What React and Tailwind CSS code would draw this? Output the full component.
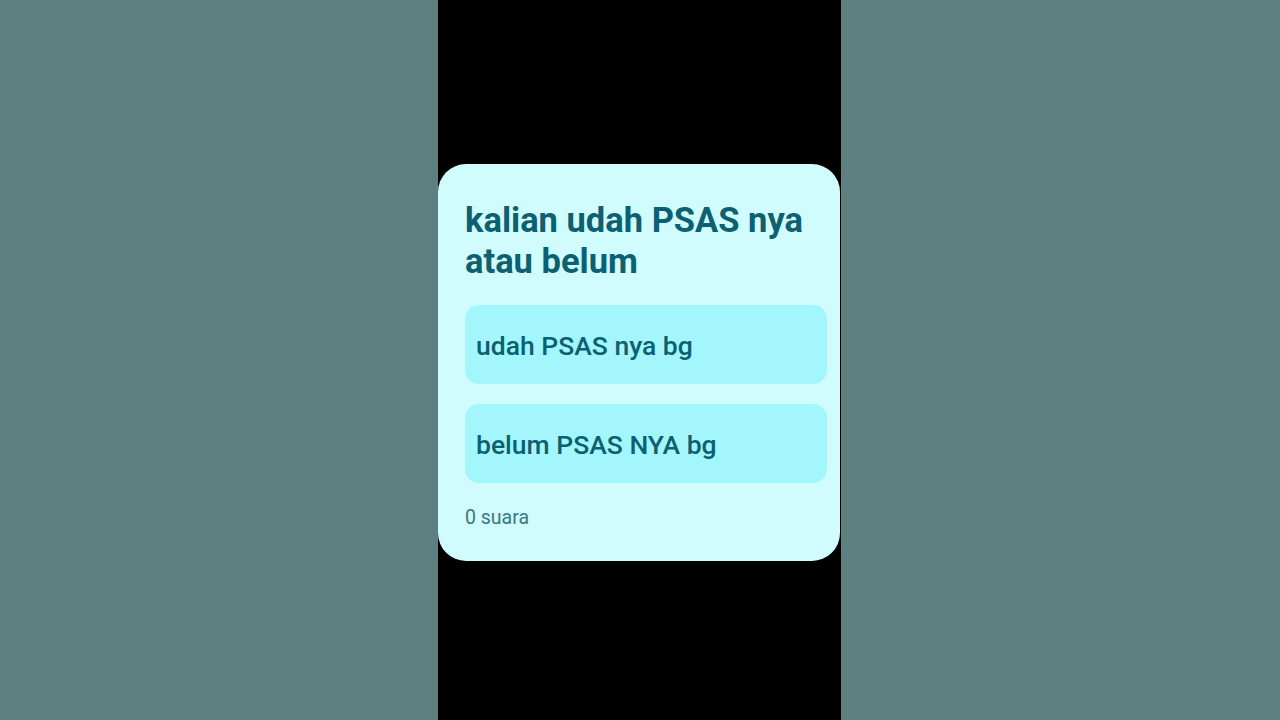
export default function App() {
    const options = ["udah PSAS nya bg", "belum PSAS NYA bg"]

    return (
        <div
            className="flex h-[720px] w-[1280px] bg-[#5e7f7f]"
            style={{ fontFamily: "Roboto, 'Noto Sans', sans-serif" }}
        >
            <div className="ml-[438px] flex h-full w-[403px] flex-col overflow-hidden bg-black pt-[164px]">

                <div className="w-[402px] rounded-[28px] bg-[#d0fcfd] pb-[31px] pl-[27px] pr-[13px] pt-[36px]">

                    <h1 className="text-[34.5px] font-bold leading-[41px] text-[#0c6072]">
                        kalian udah PSAS nya
                        <br />
                        atau belum
                    </h1>

                    <div className="mt-[23px] flex flex-col gap-[20px]">
                        {options.map((opt) => (
                            <div
                                key={opt}
                                className="flex h-[79px] items-center rounded-[14px] bg-[#a3f7fc] pl-[11px] pt-[2px]"
                            >
                                <span className="text-[26.5px] font-medium text-[#0c6072]">
                                    {opt}
                                </span>
                            </div>
                        ))}
                    </div>

                    <p className="mt-[23px] text-[19.5px] leading-[24px] text-[#3b7784]">
                        0 suara
                    </p>

                </div>

            </div>
        </div>
    )
}
